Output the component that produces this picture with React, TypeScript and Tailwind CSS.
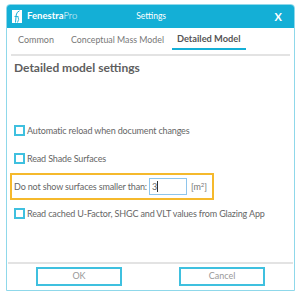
import React from "react";

const font = { fontFamily: 'Lato, "Open Sans", sans-serif' };

function Logo() {
  return (
    <svg width="10" height="13" viewBox="0 0 10 13" className="shrink-0 mt-[1px]">
      <rect x="0" y="0" width="10" height="13" fill="#ffffff" />
      <path d="M3.5 12.5 L4.2 5 Q4.6 2 7.5 0.8" stroke="#14afd6" strokeWidth="1" fill="none" />
      <path d="M2.5 6.5 L6.5 6.5 M6 7 Q7.5 9 5.5 12.5" stroke="#14afd6" strokeWidth="0.9" fill="none" />
    </svg>
  );
}

function Check({ label }: { label: string }) {
  return (
    <div className="flex items-center gap-[2px] pl-[7px] h-[11px]">
      <span className="w-[11px] h-[11px] border-2 border-[#3fc0df] bg-white shrink-0" />
      <span className="text-[9px] leading-[11px] tracking-[-0.15px] text-[#666] whitespace-nowrap">{label}</span>
    </div>
  );
}

export default function App() {
  return (
    <div className="w-[300px] h-[297px] bg-white pt-[4px] pl-[6px]" style={font}>
      <div className="w-[289px] h-[287px] border border-[#8fd8ea] rounded-t-[4px] flex flex-col overflow-hidden">
        {/* title bar */}
        <div className="h-[24px] shrink-0 -mx-px -mt-px bg-[#14afd6] rounded-t-[4px] flex items-center pl-[6px] pr-[13px] text-white">
          <Logo />
          <span className="ml-[5px] text-[9.5px] leading-none">
            <span className="font-bold">Fenestra</span>
            <span className="font-light">Pro</span>
          </span>
          <span className="ml-[59px] text-[8.5px] leading-none">Settings</span>
          <span className="ml-auto text-[11px] font-bold leading-none">X</span>
        </div>

        {/* tabs */}
        <div className="mx-[4px] h-[28px] shrink-0 border-b-2 border-[#e3e3e3] flex items-end text-[8.8px] leading-[11px] text-[#777] pl-[7px]">
          <span className="pb-[9px] text-[9px]">Common</span>
          <span className="ml-[17px] pb-[9px]">Conceptual Mass Model</span>
          <span className="ml-[8px] px-[5px] pb-[4px] text-[9.25px] font-bold text-[#555] border-b-2 border-[#14afd6] mb-[4px]">
            Detailed Model
          </span>
        </div>

        {/* body */}
        <div className="flex flex-col flex-1 min-h-0">
          <div className="pl-[7px] pt-[4px] text-[12px] font-bold text-[#5e5e5e] leading-[16px]">Detailed model settings</div>

          <div className="mt-[49px]">
            <Check label="Automatic reload when document changes" />
          </div>
          <div className="mt-[17px]">
            <Check label="Read Shade Surfaces" />
          </div>

          <div className="mt-[9px] ml-[3px] w-[204px] h-[27px] border-2 border-[#f5b92c] flex items-center pl-[2px]">
            <span className="text-[9px] tracking-[-0.15px] text-[#666] whitespace-nowrap">Do not show surfaces smaller than:</span>
            <div className="ml-[2px] w-[38px] h-[17px] border border-[#8ec5ec] flex items-center pl-[2px] text-[9px] text-[#666]">
              3<span className="w-px h-[11px] bg-[#333]" />
            </div>
            <span className="ml-[4px] text-[9px] text-[#777]">
              [m<sup className="text-[6px]">2</sup>]
            </span>
          </div>

          <div className="mt-[8px]">
            <Check label="Read cached U-Factor, SHGC and VLT values from Glazing App" />
          </div>

          <div className="mt-auto mx-[1px] border-t-2 border-[#e3e3e3] h-[28px] shrink-0 flex items-center pl-[28px] gap-[57px] pb-[2px]">
            <button className="w-[86px] h-[19px] border-2 border-[#3fc0df] text-[9px] text-[#999] bg-white">OK</button>
            <button className="w-[86px] h-[19px] border-2 border-[#3fc0df] text-[9px] text-[#999] bg-white">Cancel</button>
          </div>
        </div>
      </div>
    </div>
  );
}
